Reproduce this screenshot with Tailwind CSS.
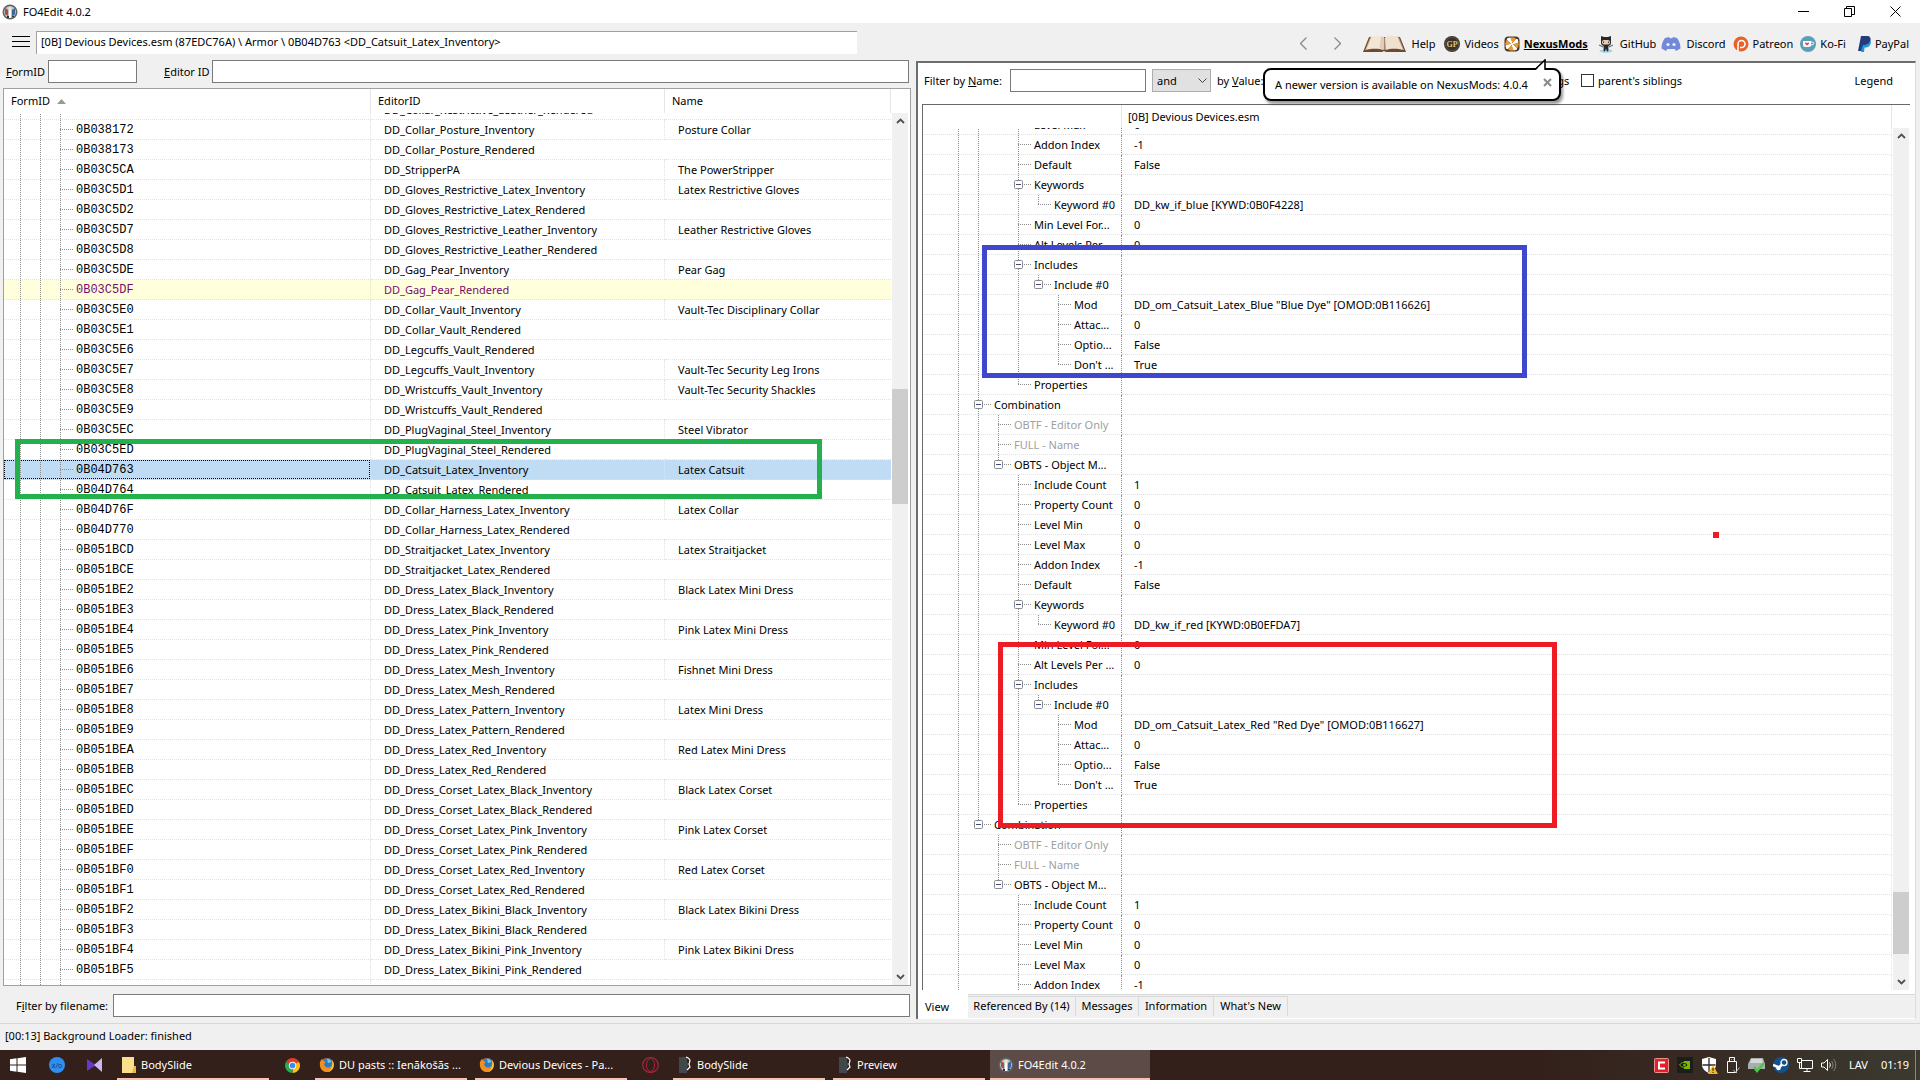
<!DOCTYPE html>
<html lang="en">
<head>
  <meta charset="UTF-8" />
  <meta name="viewport" content="width=device-width, initial-scale=1.0" />
  <title>FO4Edit 4.0.2</title>
  <script src="https://cdn.jsdelivr.net/npm/@tailwindcss/browser@4"></script>
</head>
<body class="relative flex h-screen flex-col overflow-hidden bg-[#f0f0f0] font-['Noto_Sans',sans-serif] text-[11px] leading-4 text-black">

<!-- Shared icons -->
<svg class="hidden">
  <symbol id="app-icon" viewBox="0 0 16 16">
    <circle cx="8" cy="8" r="7.500" fill="#5d6468" />
    <circle cx="8" cy="8" r="6" fill="#b9c3c6" />
    <path d="M3 4l3 2v6l-3-2z" fill="#b8483c" />
    <path d="M10 6l3-2v6l-3 3z" fill="#3f659c" />
    <circle cx="8" cy="4.500" r="1.800" fill="#f3e2c4" />
    <path d="M7 6h2v8H7z" fill="#fff" />
    <path d="M5 12h2v2H5zM10 12h2v1h-2z" fill="#333" />
  </symbol>
  <symbol id="firefox" viewBox="0 0 16 16">
    <circle cx="8" cy="8" r="7" fill="#e8701a" />
    <path d="M5 2.500C8 0 13 1.500 13.500 6c.3 3-1.500 5-4 5-2 0-3-1-3.500-2L3.500 6z" fill="#2b7fc0" />
    <path d="M8 2c2-.5 4 1 4.500 3L9 6z" fill="#7cc4ea" />
    <path d="M1 5c1-2 1.500-3 2-3l1 2c1 0 2 .3 2.500 1L5 7c.5 3 3 4 5 3.500 2-.5 3-2 3-4 2 4-.5 8.500-5 8.500-5 0-8-5-7-10z" fill="#f0901e" />
    <path d="M13 3c2 2 2.500 5 1 8-1 2-3 3.500-5 4 3-2 5-5 4-12z" fill="#ffc53a" />
  </symbol>
  <symbol id="bodyslide" viewBox="0 0 16 18">
    <path d="M0 1h8v5l2 2-2 3v6H0z" fill="#42474b" />
    <path d="M7 1c3 1 4 2 4 4l-1 3 1 3-3 3" fill="none" stroke="#fff" stroke-width="1.200" />
  </symbol>
</svg>

<!-- Title bar -->
<header class="flex h-[23px] items-center bg-white pl-[2px] pr-[2px]">
  <svg class="size-4"><use href="#app-icon" /></svg>
  <span class="pl-[5px]">FO4Edit 4.0.2</span>
  <div class="ml-auto flex items-center">
    <button aria-label="Minimize" class="flex h-[22px] w-[46px] items-center justify-center"><svg class="size-[11px]" viewBox="0 0 11 11"><path d="M0 5.500h11" stroke="#000" /></svg></button>
    <button aria-label="Restore" class="flex h-[22px] w-[46px] items-center justify-center"><svg class="size-[11px]" viewBox="0 0 11 11" fill="none" stroke="#000"><path d="M.5 2.500h7v8h-7zM2.500 2.500v-2h8v8h-3" /></svg></button>
    <button aria-label="Close" class="flex h-[22px] w-[46px] items-center justify-center"><svg class="size-[11px]" viewBox="0 0 11 11"><path d="M.5.5l10 10M10.500.5l-10 10" stroke="#000" /></svg></button>
  </div>
</header>

<!-- Toolbar -->
<div class="flex h-[33px] items-center pr-[11px]">
  <button aria-label="Menu" class="flex w-9 justify-end pr-[6px] pt-1"><svg class="h-[11px] w-[18px]" viewBox="0 0 18 11"><path d="M0 .5h18M0 5.500h18M0 10.500h18" stroke="#000" /></svg></button>
  <input aria-label="Path" readonly class="mt-[6px] h-[23px] w-[821px] border-l border-t border-[#a0a0a0] bg-white px-1 pb-[3px] outline-none" value="[0B] Devious Devices.esm (87EDC76A) \ Armor \ 0B04D763 &lt;DD_Catsuit_Latex_Inventory&gt;" />
  <div class="ml-auto flex items-center pt-2">
    <button aria-label="Back" class="mr-[27px]"><svg class="h-[13px] w-[7px]" viewBox="0 0 7 13"><path d="M6.500.5l-6 6 6 6" fill="none" stroke="#8a8a8a" stroke-width="1.300" /></svg></button>
    <button aria-label="Forward" class="mr-[22px]"><svg class="h-[13px] w-[7px]" viewBox="0 0 7 13"><path d="M.5.5l6 6-6 6" fill="none" stroke="#8a8a8a" stroke-width="1.300" /></svg></button>
    <a href="#help" class="mr-[9px] flex items-center gap-[5px]">
      <svg class="h-[18px] w-[43px]" viewBox="0 0 43 18">
        <path d="M6 2L0 17h19l2-1 2 1h20L37 2z" fill="#6d4a35" />
        <path d="M8 1.500C13 0 18 .5 21 2.500L20.500 15C15 13 8 13.500 2.500 15z" fill="#f4e6d6" />
        <path d="M35 1.500C30 0 25 .5 22 2.500L22.500 15c5.500-2 12.500-1.500 18 0z" fill="#efe0cf" />
        <path d="M18 1.200C20 1.700 21 2.500 21.500 3v12c-1-.8-3-1.300-5-1.500z" fill="#e0ccb8" />
        <path d="M8 1.500L2.500 15M35 1.500L40.500 15" stroke="#c79a72" fill="none" />
      </svg>Help</a>
    <a href="#videos" class="mr-[5px] flex items-center gap-1">
      <svg class="size-4" viewBox="0 0 16 16"><circle cx="8" cy="8" r="8" fill="#39332b" /><circle cx="8" cy="8" r="6.800" fill="none" stroke="#6b6048" stroke-width=".7" /><text x="8" y="11" text-anchor="middle" font-size="8" font-weight="700" font-family="Liberation Serif" fill="#d9c27c">GP</text></svg>Videos</a>
    <a href="#nexus" class="mr-[10px] flex items-center gap-1 font-bold underline">
      <svg class="size-4" viewBox="0 0 16 16"><rect x=".5" y=".5" width="15" height="15" rx="4" fill="#4a3a2a" /><circle cx="8" cy="8" r="6.800" fill="#e59a35" /><path d="M8 8L3 3l3-1zM8 8l5-5 1 3zM8 8l5 5-3 1zM8 8l-5 5-1-3z" fill="#fff" stroke="#fff" /></svg>NexusMods</a>
    <a href="#github" class="mr-[5px] flex items-center gap-[6px]">
      <svg class="h-[18px] w-4" viewBox="0 0 16 18"><ellipse cx="8" cy="16" rx="6.500" ry="1.800" fill="#a5d4e6" /><path d="M3 1l3 1h4l3-1v7c0 2-2 3-3 3H6c-1 0-3-1-3-3z" fill="#24292e" /><rect x="4" y="5" width="8" height="4.500" rx="2" fill="#f0c9a8" /><path d="M5.500 6.500v1.500M10.500 6.500v1.500" stroke="#5b3526" /><path d="M6 11h4v5H9v-2H7v2H6zM1 10l4 2M15 10l-4 2" fill="#24292e" stroke="#24292e" stroke-width=".8" /></svg>GitHub</a>
    <a href="#discord" class="mr-[7px] flex items-center gap-[5px]">
      <svg class="h-[16px] w-5" viewBox="0 0 20 16"><path d="M4 2l4-1 .8 1.200h2.400L12 1l4 1c2.500 3 3.500 7 3.500 10.500L15 15l-1.300-2H6.300L5 15 .5 12.500C.5 9 1.500 5 4 2z" fill="#7289da" /><circle cx="7" cy="8.500" r="1.600" fill="#f0f0f0" /><circle cx="13" cy="8.500" r="1.600" fill="#f0f0f0" /></svg>Discord</a>
    <a href="#patreon" class="mr-[7px] flex items-center gap-1">
      <svg class="size-4" viewBox="0 0 16 16"><circle cx="8" cy="8" r="7.500" fill="#e8622a" /><path d="M5 15V8a3.500 3.500 0 1 1 3.500 3.500H7" fill="none" stroke="#fff" stroke-width="1.600" /></svg>Patreon</a>
    <a href="#kofi" class="mr-3 flex items-center gap-1">
      <svg class="size-4" viewBox="0 0 16 16"><circle cx="8" cy="8" r="8" fill="#5a9fb8" /><path d="M3 5h8v4a2 2 0 0 1-2 2H5a2 2 0 0 1-2-2z" fill="#fff" /><path d="M11 6h1.200a1.300 1.300 0 0 1 0 2.800H11" fill="none" stroke="#fff" /><path d="M7 9.800L5 7.800c-.8-1.300 1.200-2 2-.7.800-1.300 2.800-.6 2 .7z" fill="#ef4a4a" /></svg>Ko-Fi</a>
    <a href="#paypal" class="flex items-center gap-1">
      <svg class="h-4 w-[13px]" viewBox="0 0 13 16"><path d="M3 0h6c3 0 4 2 3.500 4.500C12 8 9.500 9 7 9H5.500l-1 6H0z" fill="#253b80" /><path d="M12 4.200c1 1 1 2.300.6 3.500C12 10 10 11.500 7.500 11.500H6.600L6 16H3l1-5 1.500-2C9 9 11.500 8 12 4.200z" fill="#179bd7" /></svg>PayPal</a>
  </div>
</div>

<main class="grid min-h-0 flex-1 grid-cols-[916fr_1004fr]">

  <!-- Left panel: record list -->
  <section class="flex min-h-0 flex-col pb-[6px] pl-[3px] pr-[5px] pt-1">
    <div class="flex h-[23px] items-center pl-[3px] pr-[2px]">
      <label for="formid" class="w-[42px]"><u>F</u>ormID</label>
      <input id="formid" class="h-[23px] w-[89px] border border-[#7a7a7a] bg-white px-1" />
      <label for="editorid" class="ml-[27px] w-12"><u>E</u>ditor ID</label>
      <input id="editorid" class="h-[23px] min-w-0 flex-1 border border-[#7a7a7a] bg-white px-1" />
    </div>
    <div class="mt-[5px] flex min-h-0 flex-1 border border-[#a0a0a0] bg-white">
      <div class="min-w-0 flex-1 overflow-hidden">
        <div class="relative z-10 flex h-6 items-stretch bg-white leading-6">
          <div class="w-[367px] border-r border-[#e5e5e5] pl-[7px]">FormID <svg class="mb-[2px] ml-1 inline h-[5px] w-[9px]" viewBox="0 0 9 5"><path d="M0 5l4.500-5L9 5z" fill="#999" /></svg></div>
          <div class="w-[294px] border-r border-[#e5e5e5] pl-[7px]">EditorID</div>
          <div class="flex-1 border-r border-[#e5e5e5] pl-[7px]">Name</div>
        </div>
        <table class="-mt-[13px] w-full table-fixed border-separate border-spacing-0">
          <colgroup><col class="w-[367px]" /><col class="w-[294px]" /><col /></colgroup>
          <tbody id="records"></tbody>
        </table>
      </div>
      <div class="flex w-[19px] flex-col pl-px pr-[2px] pt-6">
        <div class="flex min-h-0 flex-1 flex-col bg-[#f0f0f0]">
          <button aria-label="Scroll up" class="flex h-4 items-center justify-center"><svg class="h-[6px] w-[9px]" viewBox="0 0 9 6"><path d="M1 5l3.500-3.500L8 5" fill="none" stroke="#505050" stroke-width="1.800" /></svg></button>
          <div class="grow-[260] basis-0"></div>
          <div class="grow-[115] basis-0 bg-[#cdcdcd]"></div>
          <div class="grow-[465] basis-0"></div>
          <button aria-label="Scroll down" class="flex h-4 items-center justify-center"><svg class="h-[6px] w-[9px]" viewBox="0 0 9 6"><path d="M1 1l3.500 3.500L8 1" fill="none" stroke="#505050" stroke-width="1.800" /></svg></button>
        </div>
      </div>
    </div>
    <div class="mt-2 flex h-[23px] items-center pl-[13px] pr-px">
      <label for="filename" class="w-[97px]">F<u>i</u>lter by filename:</label>
      <input id="filename" class="h-[23px] min-w-0 flex-1 border border-[#7a7a7a] bg-white px-1" />
    </div>
  </section>

  <!-- Right panel: record view -->
  <section class="flex min-h-0 flex-col pb-1 pr-1 pt-[5px]">
    <div class="flex min-h-0 flex-1 flex-col border-l-2 border-t-2 border-[#6d6d6d] border-r border-r-[#dcdcdc]">
      <div class="flex min-h-0 flex-1 flex-col border-b border-[#d9d9d9] bg-white pb-1 pl-1 pr-[5px]">
        <div class="flex h-[41px] items-center pb-[6px] pl-[2px] pr-[17px]">
          <label for="by-name" class="w-[86px]">Filter by <u>N</u>ame:</label>
          <input id="by-name" class="h-[23px] w-[136px] border border-[#7a7a7a] bg-white px-1" />
          <div class="relative ml-[6px] flex items-center">
            <select aria-label="Operator" class="h-[23px] w-[59px] appearance-none border border-[#adadad] bg-[#e1e1e1] pl-[4px]"><option>and</option><option>or</option></select>
            <svg class="pointer-events-none absolute right-[4px] h-[6px] w-[9px]" viewBox="0 0 9 6"><path d="M.5.5l4 4 4-4" fill="none" stroke="#444" /></svg>
          </div>
          <label for="by-value" class="ml-[6px] w-[50px]">by <u>V</u>alue:</label>
          <input id="by-value" class="h-[23px] w-[240px] border border-[#7a7a7a] bg-white px-1" />
          <label class="ml-[6px] flex w-[68px] items-center gap-1"><input type="checkbox" class="size-[13px] shrink-0 appearance-none border border-[#333] bg-white" />siblings</label>
          <label class="flex items-center gap-1"><input type="checkbox" class="size-[13px] appearance-none border border-[#333] bg-white" />parent's siblings</label>
          <button class="ml-auto">Legend</button>
        </div>
        <div class="flex min-h-0 flex-1 border-l border-t border-[#696969]">
          <div class="min-w-0 flex-1 overflow-hidden">
            <div class="relative z-10 flex h-[23px] items-stretch bg-white leading-6">
              <div class="w-[199px] border-r border-[#e5e5e5]"></div>
              <div class="flex-1 border-r border-[#e5e5e5] pl-[6px]">[0B] Devious Devices.esm</div>
            </div>
            <table class="-mt-[13px] w-full table-fixed border-separate border-spacing-0">
              <colgroup><col class="w-[199px]" /><col /></colgroup>
              <tbody id="elements"></tbody>
            </table>
          </div>
          <div class="flex w-[18px] flex-col pl-px pr-px pt-[23px]">
            <div class="flex min-h-0 flex-1 flex-col bg-[#f0f0f0]">
              <button aria-label="Scroll up" class="flex h-4 items-center justify-center"><svg class="h-[6px] w-[9px]" viewBox="0 0 9 6"><path d="M1 5l3.500-3.500L8 5" fill="none" stroke="#505050" stroke-width="1.800" /></svg></button>
              <div class="grow-[748] basis-0"></div>
              <div class="grow-[62] basis-0 bg-[#cdcdcd]"></div>
              <div class="grow-[20] basis-0"></div>
              <button aria-label="Scroll down" class="flex h-4 items-center justify-center"><svg class="h-[6px] w-[9px]" viewBox="0 0 9 6"><path d="M1 1l3.500 3.500L8 1" fill="none" stroke="#505050" stroke-width="1.800" /></svg></button>
            </div>
          </div>
        </div>
      </div>
      <nav class="flex h-6 items-start border-b border-white">
        <button class="-mt-px h-6 w-[50px] bg-white pl-[7px] pt-px text-left">View</button>
        <button class="mt-px h-5 w-[108px] border-r border-t border-[#d9d9d9] pb-px">Referenced By (14)</button>
        <button class="mt-px h-5 w-[63px] border-r border-t border-[#d9d9d9] pb-px">Messages</button>
        <button class="mt-px h-5 w-[75px] border-r border-t border-[#d9d9d9] pb-px">Information</button>
        <button class="mt-px h-5 w-[74px] border-r border-t border-[#d9d9d9] pb-px">What's New</button>
      </nav>
    </div>
  </section>
</main>

<!-- Status bar -->
<div class="flex h-[27px] items-center border-t border-[#d7d7d7] pb-[2px] pl-[5px]">[00:13] Background Loader: finished</div>

<!-- Taskbar -->
<footer class="flex h-[30px] items-stretch bg-linear-to-r from-[#33201a] via-[#33201a] via-80% to-[#3b3a30] text-white">
  <button aria-label="Start" class="flex w-9 items-center justify-center"><svg class="size-4" viewBox="0 0 16 16"><path d="M0 2.300l6.500-1v6.200H0zM7.500 1.200L16 0v7.500H7.500zM0 8.500h6.500v6.200l-6.500-1zM7.500 8.500H16V16l-8.500-1.200z" fill="#fff" /></svg></button>
  <button aria-label="xo" class="flex w-[42px] items-center justify-center"><svg class="size-4" viewBox="0 0 16 16"><circle cx="8" cy="8" r="8" fill="#2f8ef0" /><text x="8" y="11" text-anchor="middle" font-size="7" font-family="Noto Sans" fill="#123a7a">x/o</text></svg></button>
  <button aria-label="Visual Studio" class="flex w-8 items-center justify-center"><svg class="h-[14px] w-[15px]" viewBox="0 0 15 14"><path d="M0 1l9 6-9 6z" fill="#6a35c9" /><path d="M15 0v14L7 7z" fill="#cdb7f2" /></svg></button>
  <button class="ml-[7px] flex w-[152px] items-center gap-[5px] border-b-2 border-[#f7c2b0] pl-[5px] pt-[2px]"><svg class="h-4 w-[14px]" viewBox="0 0 14 16"><path d="M0 0h12v9h2v7H0z" fill="#fbe08c" /><path d="M12 9l-2 7h4V9z" fill="#e5b94a" /></svg>BodySlide</button>
  <button aria-label="Chrome" class="flex w-[46px] items-center justify-center"><svg class="size-[15px]" viewBox="0 0 16 16"><path d="M8 8L1.100 4A8 8 0 0 1 14.900 4z" fill="#e33b2e" /><path d="M8 8l6.900-4A8 8 0 0 1 8 16z" fill="#fbc116" /><path d="M8 8v8A8 8 0 0 1 1.100 4z" fill="#2da94f" /><circle cx="8" cy="8" r="3.900" fill="#fff" /><circle cx="8" cy="8" r="3" fill="#4285f4" /></svg></button>
  <button class="flex w-[152px] items-center gap-[4px] border-b-2 border-[#f7c2b0] pl-[4px] pt-[2px]"><svg class="size-4"><use href="#firefox" /></svg>DU pasts :: Ienākošās ...</button>
  <button class="ml-2 flex w-[152px] items-center gap-[4px] border-b-2 border-[#f7c2b0] pl-[4px] pt-[2px]"><svg class="size-4"><use href="#firefox" /></svg>Devious Devices - Pa...</button>
  <button aria-label="Opera" class="flex w-[46px] items-center justify-center"><svg class="h-4 w-[17px]" viewBox="0 0 17 16" fill="none" stroke="#a8243a"><ellipse cx="8.500" cy="8" rx="7.800" ry="7.500" stroke-width="1.200" /><ellipse cx="8.500" cy="8" rx="4" ry="6.500" /></svg></button>
  <button class="flex w-[152px] items-center gap-[2px] border-b-2 border-[#f7c2b0] pl-[6px] pt-[2px]"><svg class="h-[18px] w-4"><use href="#bodyslide" /></svg>BodySlide</button>
  <button class="ml-2 flex w-[152px] items-center gap-[2px] border-b-2 border-[#f7c2b0] pl-[6px] pt-[2px]"><svg class="h-[18px] w-4"><use href="#bodyslide" /></svg>Preview</button>
  <button class="ml-[5px] flex w-40 items-center gap-1 border-b-2 border-[#f7c2b0] bg-[#5c4b47] pl-2 pt-[2px]"><svg class="size-4"><use href="#app-icon" /></svg>FO4Edit 4.0.2</button>
  <div class="ml-auto mr-1 flex items-center gap-2 border-r border-[#8a877e] pr-[6px]">
    <svg class="size-[15px]" viewBox="0 0 15 15"><rect x=".5" y=".5" width="14" height="14" rx="1" fill="#e0202a" stroke="#f0908c" /><path d="M10 5.500V4.500H5v6h5v-1" fill="none" stroke="#fff" stroke-width="2" /></svg>
    <svg class="size-4" viewBox="0 0 16 16"><path d="M0 0h16v16H0z" fill="#1d1d1b" /><path d="M7 4h6v8H7z" fill="#76b900" /><path d="M2.500 8C5 4.500 9 4.500 11 8c-2 3-6 3-8.500 0z" fill="#1d1d1b" stroke="#76b900" /><circle cx="7.500" cy="8" r="1.300" fill="#76b900" /></svg>
    <svg class="size-[17px]" viewBox="0 0 17 17"><path d="M8 0l7 2v6c0 4-4 7-7 8-3-1-7-4-7-8V2z" fill="#fff" /><path d="M8 1v14M1.500 8h13" stroke="#2b2b26" stroke-width="1.300" /><path d="M12 8l5 9H7z" fill="#f7b519" /><path d="M12 11v3M12 15v1" stroke="#4a3500" stroke-width="1.200" /></svg>
    <svg class="h-[17px] w-[14px]" viewBox="0 0 14 17" fill="none" stroke="#fff"><path d="M3.500.5h5v4h-5zM1.500 4.500h9v11h-9z" /><path d="M5 2.500h.5M7 2.500h.5" /><path d="M7.500 13l2 2.500 4-5" stroke="#bbb" /></svg>
    <svg class="h-4 w-[17px]" viewBox="0 0 17 16"><path d="M3 1h12l2 6v5H0V7z" fill="#a9adad" /><path d="M3 2h11l1 4H2z" fill="#d5d8d8" /><path d="M6 10l3 4 7-8" fill="none" stroke="#46c946" stroke-width="2.500" /></svg>
    <svg class="size-4" viewBox="0 0 16 16"><circle cx="8" cy="8" r="8" fill="#15508c" /><path d="M0 8l6 2.500 4-4" stroke="#fff" stroke-width="2.500" fill="none" /><circle cx="11" cy="5.500" r="3" fill="#15508c" stroke="#fff" stroke-width="1.300" /><circle cx="5.500" cy="11" r="2.300" fill="#fff" /></svg>
    <svg class="h-[15px] w-4" viewBox="0 0 16 15" fill="none" stroke="#fff"><path d="M4.500 2.500h11v8h-11zM10 10.500v3M6.500 13.500h7M.5.500h4v4h-4zM2.500 4.500v6h2" /></svg>
    <svg class="h-[14px] w-4" viewBox="0 0 16 14" fill="none" stroke="#fff"><path d="M.5 5v4H3l3.500 3.500v-11L3 5z" /><path d="M8.500 4.500c1 1.500 1 3.500 0 5" /><path d="M10.500 3c2 2.500 2 5.500 0 8M12.500 1c3 3.500 3 8.500 0 12" stroke="#8a877e" /></svg>
    <span class="ml-[4px]">LAV</span>
    <span class="ml-[5px]">01:19</span>
  </div>
</footer>

<!-- Update balloon -->
<div class="absolute right-[359px] top-[68px] z-20 flex h-[33px] w-[298px] items-center rounded-lg border-2 border-black bg-white pl-[10px] shadow-[2px_3px_3px_#0006]">
  <svg class="absolute -top-[11px] right-[12px] h-3 w-3" viewBox="0 0 12 12"><path d="M1 11L10 1v10z" fill="#fff" /><path d="M0 10.500L10 1v10" fill="none" stroke="#000" stroke-width="1.600" /><path d="M1.500 11.500h8" stroke="#fff" stroke-width="2" /></svg>
  <span>A newer version is available on NexusMods: 4.0.4</span>
  <button aria-label="Close balloon" class="mb-1 ml-auto mr-[7px]"><svg class="size-[9px]" viewBox="0 0 9 9"><path d="M1 1l7 7M8 1L1 8" stroke="#8a8a8a" stroke-width="2" /></svg></button>
</div>

<!-- Highlights -->
<div class="pointer-events-none absolute left-[15px] top-[439px] z-20 h-[60px] w-[807px] border-5 border-[#22b14c]"></div>
<div class="pointer-events-none absolute left-[982px] top-[245px] z-20 h-[133px] w-[545px] border-5 border-[#3f48cc]"></div>
<div class="pointer-events-none absolute left-[998px] top-[642px] z-20 h-[186px] w-[559px] border-5 border-[#ed1c24]"></div>
<div class="pointer-events-none absolute left-[1713px] top-[532px] z-20 size-[6px] bg-[#ed1c24]"></div>

<script>
const records = [
  ['0B038151', 'DD_Collar_Restrictive_Leather_Rendered', ''],
  ['0B038172', 'DD_Collar_Posture_Inventory', 'Posture Collar'],
  ['0B038173', 'DD_Collar_Posture_Rendered', ''],
  ['0B03C5CA', 'DD_StripperPA', 'The PowerStripper'],
  ['0B03C5D1', 'DD_Gloves_Restrictive_Latex_Inventory', 'Latex Restrictive Gloves'],
  ['0B03C5D2', 'DD_Gloves_Restrictive_Latex_Rendered', ''],
  ['0B03C5D7', 'DD_Gloves_Restrictive_Leather_Inventory', 'Leather Restrictive Gloves'],
  ['0B03C5D8', 'DD_Gloves_Restrictive_Leather_Rendered', ''],
  ['0B03C5DE', 'DD_Gag_Pear_Inventory', 'Pear Gag'],
  ['0B03C5DF', 'DD_Gag_Pear_Rendered', ''],
  ['0B03C5E0', 'DD_Collar_Vault_Inventory', 'Vault-Tec Disciplinary Collar'],
  ['0B03C5E1', 'DD_Collar_Vault_Rendered', ''],
  ['0B03C5E6', 'DD_Legcuffs_Vault_Rendered', ''],
  ['0B03C5E7', 'DD_Legcuffs_Vault_Inventory', 'Vault-Tec Security Leg Irons'],
  ['0B03C5E8', 'DD_Wristcuffs_Vault_Inventory', 'Vault-Tec Security Shackles'],
  ['0B03C5E9', 'DD_Wristcuffs_Vault_Rendered', ''],
  ['0B03C5EC', 'DD_PlugVaginal_Steel_Inventory', 'Steel Vibrator'],
  ['0B03C5ED', 'DD_PlugVaginal_Steel_Rendered', ''],
  ['0B04D763', 'DD_Catsuit_Latex_Inventory', 'Latex Catsuit'],
  ['0B04D764', 'DD_Catsuit_Latex_Rendered', ''],
  ['0B04D76F', 'DD_Collar_Harness_Latex_Inventory', 'Latex Collar'],
  ['0B04D770', 'DD_Collar_Harness_Latex_Rendered', ''],
  ['0B051BCD', 'DD_Straitjacket_Latex_Inventory', 'Latex Straitjacket'],
  ['0B051BCE', 'DD_Straitjacket_Latex_Rendered', ''],
  ['0B051BE2', 'DD_Dress_Latex_Black_Inventory', 'Black Latex Mini Dress'],
  ['0B051BE3', 'DD_Dress_Latex_Black_Rendered', ''],
  ['0B051BE4', 'DD_Dress_Latex_Pink_Inventory', 'Pink Latex Mini Dress'],
  ['0B051BE5', 'DD_Dress_Latex_Pink_Rendered', ''],
  ['0B051BE6', 'DD_Dress_Latex_Mesh_Inventory', 'Fishnet Mini Dress'],
  ['0B051BE7', 'DD_Dress_Latex_Mesh_Rendered', ''],
  ['0B051BE8', 'DD_Dress_Latex_Pattern_Inventory', 'Latex Mini Dress'],
  ['0B051BE9', 'DD_Dress_Latex_Pattern_Rendered', ''],
  ['0B051BEA', 'DD_Dress_Latex_Red_Inventory', 'Red Latex Mini Dress'],
  ['0B051BEB', 'DD_Dress_Latex_Red_Rendered', ''],
  ['0B051BEC', 'DD_Dress_Corset_Latex_Black_Inventory', 'Black Latex Corset'],
  ['0B051BED', 'DD_Dress_Corset_Latex_Black_Rendered', ''],
  ['0B051BEE', 'DD_Dress_Corset_Latex_Pink_Inventory', 'Pink Latex Corset'],
  ['0B051BEF', 'DD_Dress_Corset_Latex_Pink_Rendered', ''],
  ['0B051BF0', 'DD_Dress_Corset_Latex_Red_Inventory', 'Red Latex Corset'],
  ['0B051BF1', 'DD_Dress_Corset_Latex_Red_Rendered', ''],
  ['0B051BF2', 'DD_Dress_Latex_Bikini_Black_Inventory', 'Black Latex Bikini Dress'],
  ['0B051BF3', 'DD_Dress_Latex_Bikini_Black_Rendered', ''],
  ['0B051BF4', 'DD_Dress_Latex_Bikini_Pink_Inventory', 'Pink Latex Bikini Dress'],
  ['0B051BF5', 'DD_Dress_Latex_Bikini_Pink_Rendered', ''],
  ['', '', ''],
];

// Guides: | line, + child, L last child, B open node, E open last node
const elements = [
  ['|| +', 'Level Max', '0'],
  ['|| +', 'Addon Index', '-1'],
  ['|| +', 'Default', 'False'],
  ['|| B', 'Keywords', ''],
  ['|| |L', 'Keyword #0', 'DD_kw_if_blue [KYWD:0B0F4228]'],
  ['|| +', 'Min Level For...', '0'],
  ['|| +', 'Alt Levels Per ...', '0'],
  ['|| B', 'Includes', ''],
  ['|| |E', 'Include #0', ''],
  ['|| | +', 'Mod', 'DD_om_Catsuit_Latex_Blue "Blue Dye" [OMOD:0B116626]'],
  ['|| | +', 'Attac...', '0'],
  ['|| | +', 'Optio...', 'False'],
  ['|| | L', "Don't ...", 'True'],
  ['|| L', 'Properties', ''],
  ['|B', 'Combination', ''],
  ['||+', 'OBTF - Editor Only', '', true],
  ['||+', 'FULL - Name', '', true],
  ['||E', 'OBTS - Object M...', ''],
  ['|| +', 'Include Count', '1'],
  ['|| +', 'Property Count', '0'],
  ['|| +', 'Level Min', '0'],
  ['|| +', 'Level Max', '0'],
  ['|| +', 'Addon Index', '-1'],
  ['|| +', 'Default', 'False'],
  ['|| B', 'Keywords', ''],
  ['|| |L', 'Keyword #0', 'DD_kw_if_red [KYWD:0B0EFDA7]'],
  ['|| +', 'Min Level For...', '0'],
  ['|| +', 'Alt Levels Per ...', '0'],
  ['|| B', 'Includes', ''],
  ['|| |E', 'Include #0', ''],
  ['|| | +', 'Mod', 'DD_om_Catsuit_Latex_Red "Red Dye" [OMOD:0B116627]'],
  ['|| | +', 'Attac...', '0'],
  ['|| | +', 'Optio...', 'False'],
  ['|| | L', "Don't ...", 'True'],
  ['|| L', 'Properties', ''],
  ['|E', 'Combination', ''],
  ['| +', 'OBTF - Editor Only', '', true],
  ['| +', 'FULL - Name', '', true],
  ['| E', 'OBTS - Object M...', ''],
  ['|  +', 'Include Count', '1'],
  ['|  +', 'Property Count', '0'],
  ['|  +', 'Level Min', '0'],
  ['|  +', 'Level Max', '0'],
  ['|  +', 'Addon Index', '-1'],
];

function guide(kind, last) {
  let s = '';
  if ('|+B'.includes(kind)) s += '<path d="M.5 0v19" stroke="#8c8c8c" stroke-dasharray="1 1" />';
  if ('LE'.includes(kind)) s += '<path d="M.5 0v10" stroke="#8c8c8c" stroke-dasharray="1 1" />';
  if ('+LBE'.includes(kind)) s += '<path d="M0 9.5h13" stroke="#8c8c8c" stroke-dasharray="1 1" />';
  if ('BE'.includes(kind)) s += '<rect x="-3.5" y="5.5" width="8" height="8" rx="1" fill="#fff" stroke="#8a8a8a" /><path d="M-2 9.5h5" stroke="#3c4a8c" />';
  return `<svg class="${last ? 'w-4' : 'w-5'} h-[19px] shrink-0 overflow-visible">${s}</svg>`;
}
function guides(str) {
  return [...str].map((k, i) => guide(k, i === str.length - 1)).join('');
}

document.getElementById('records').innerHTML = records.map(([id, editor, name]) => {
  const selected = id === '0B04D763';
  let row = '';
  if (id === '0B03C5DF') row = 'bg-[#ffffdc] text-[#7b0b6b]';
  if (selected) row = 'bg-[#bfdcf4]';
  return `<tr class="h-5 ${row}">
    <td class="h-5 border-b border-r border-dotted border-[#e2e2e2] p-0"><div class="flex h-[19px] items-center pl-4 font-['Liberation_Mono',monospace] text-xs ${selected ? 'outline-1 -outline-offset-1 outline-dotted outline-black' : ''}">${guides(id ? '||+' : '|||')}${id}</div></td>
    <td class="h-5 border-b ${name ? 'border-r' : ''} border-dotted border-[#e2e2e2] p-0 pl-[13px]">${editor}</td>
    <td class="h-5 border-b border-dotted border-[#e2e2e2] p-0 pl-[13px]">${name}</td>
  </tr>`;
}).join('');

document.getElementById('elements').innerHTML = elements.map(([g, label, value, empty]) =>
  `<tr class="h-5">
    <td class="h-5 border-b border-r border-dotted border-b-[#e2e2e2] border-r-[#8c8c8c] p-0"><div class="flex h-[19px] items-center whitespace-nowrap pl-[35px] ${empty ? 'text-[#a0a0a0]' : ''}">${guides(g)}${label}</div></td>
    <td class="h-5 border-b border-r border-dotted border-[#e2e2e2] p-0 pl-3">${value}</td>
  </tr>`).join('');
</script>

</body>
</html>
